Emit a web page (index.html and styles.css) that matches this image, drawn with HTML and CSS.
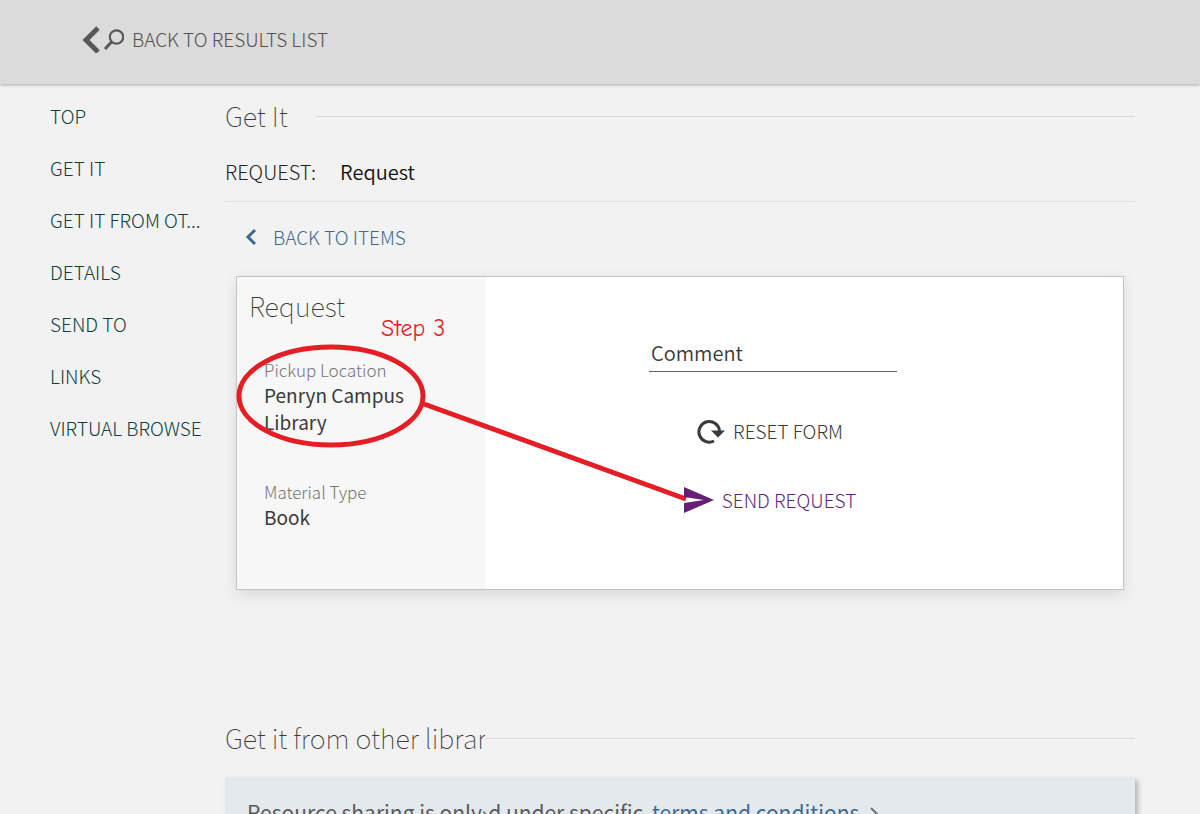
FILE: index.html
```html
<!DOCTYPE html>
<html lang="en">
<head>
    <meta charset="UTF-8">
    <meta name="viewport" content="width=device-width, initial-scale=1.0">
    <title>Library Search - Request</title>
    <link rel="stylesheet" href="styles.css">
</head>
<body>
    <header class="top-bar">
        <a href="#" class="back-results">
            <svg width="42" height="28" viewBox="0 0 42 28" aria-hidden="true">
                <path d="M16 3 L4 15 L16 27" fill="none" stroke="#585858" stroke-width="5"/>
                <circle cx="34.500" cy="12" r="6.700" fill="none" stroke="#585858" stroke-width="2.200"/>
                <path d="M30 16.500 L23 24" stroke="#585858" stroke-width="3"/>
            </svg>
            <span>BACK TO RESULTS LIST</span>
        </a>
    </header>

    <div class="page">
        <nav class="side-nav">
            <a href="#top">TOP</a>
            <a href="#getit">GET IT</a>
            <a href="#other">GET IT FROM OT...</a>
            <a href="#details">DETAILS</a>
            <a href="#send">SEND TO</a>
            <a href="#links">LINKS</a>
            <a href="#browse">VIRTUAL BROWSE</a>
        </nav>

        <main class="content">
            <section class="get-it" id="getit">
                <div class="section-head">
                    <h2>Get It</h2>
                    <hr>
                </div>
                <div class="request-row">
                    <span>REQUEST:</span>
                    <span class="request-type">Request</span>
                </div>
                <a href="#" class="back-items">
                    <svg width="12" height="18" viewBox="0 0 12 18" aria-hidden="true">
                        <path d="M10 2 L3 9 L10 16" fill="none" stroke="#3f6a8f" stroke-width="3"/>
                    </svg>
                    <span>BACK TO ITEMS</span>
                </a>

                <div class="card">
                    <div class="summary">
                        <h3>Request</h3>
                        <dl>
                            <dt>Pickup Location</dt>
                            <dd>Penryn Campus Library</dd>
                            <dt>Material Type</dt>
                            <dd>Book</dd>
                        </dl>
                    </div>
                    <form class="request-form">
                        <input type="text" name="comment" placeholder="Comment" aria-label="Comment">
                        <button type="reset" class="reset">
                            <svg width="28" height="26" viewBox="0 0 28 26" aria-hidden="true">
                                <path d="M17 23 A10.300 10.300 0 1 1 22.500 13" fill="none" stroke="#3a3a3a" stroke-width="3"/>
                                <path d="M14 12.500 L28 12.500 L21 19.500 Z" fill="#3a3a3a"/>
                            </svg>
                            <span>RESET FORM</span>
                        </button>
                        <button type="submit" class="send">
                            <svg width="30" height="26" viewBox="0 0 30 26" aria-hidden="true">
                                <path d="M0 0 L30 13 L0 26 L0 16 L20 13 L0 10 Z" fill="#651f76"/>
                            </svg>
                            <span>SEND REQUEST</span>
                        </button>
                    </form>
                    <svg class="marker" width="460" height="240" viewBox="0 0 460 240" aria-hidden="true">
                        <ellipse cx="94" cy="119" rx="92" ry="49"/>
                        <path d="M187 127 L449 222"/>
                    </svg>
                    <span class="step">Step 3</span>
                </div>
            </section>

            <section id="other">
                <div class="section-head">
                    <h2>Get it from other librar</h2>
                    <hr>
                </div>
                <div class="notice">
                    Resource sharing is only›d under specific
                    <a href="#">terms and conditions</a>
                    <svg width="10" height="16" viewBox="0 0 10 16" aria-hidden="true">
                        <path d="M1 1 L8 8 L1 15" fill="none" stroke="#5f7478" stroke-width="2"/>
                    </svg>
                </div>
            </section>
        </main>
    </div>
</body>
</html>
```
FILE: styles.css
```css
* {
    box-sizing: border-box;
}
body {
    margin: 0;
    background-color: #f2f2f2;
    color: #3a3a3a;
    font-family: "Noto Sans CJK SC", "Noto Sans", sans-serif;
    font-size: 19px;
    font-weight: 300;
    line-height: 26px;
    overflow: hidden;
}
a {
    text-decoration: none;
}
h2, h3, dl, dd {
    margin: 0;
}
.top-bar {
    display: flex;
    align-items: center;
    height: 84px;
    padding: 0 82px 6px;
    background-color: #dbdbdb;
    box-shadow: 0 1px 3px rgba(0, 0, 0, 0.3);
}
.back-results {
    display: flex;
    align-items: center;
    gap: 8px;
    color: #505050;
}
.page {
    display: grid;
    grid-template-columns: 159px 1fr;
    column-gap: 16px;
    padding: 19px 65px 0 50px;
}
.side-nav {
    display: flex;
    flex-direction: column;
    gap: 26px;
}
.side-nav a {
    color: #0f4040;
    white-space: nowrap;
}
.get-it {
    height: 622px;
}
.section-head {
    display: flex;
    align-items: center;
}
.section-head h2 {
    flex: none;
    max-width: 260px;
    padding-right: 28px;
    overflow: hidden;
    white-space: nowrap;
}
h2, h3 {
    color: #3a3a3a;
    font-size: 27px;
    font-weight: 100;
}
.section-head hr {
    flex: 1;
    margin: 0;
    border: 0;
    border-top: 1px solid #d8d8d8;
}
.request-row {
    display: flex;
    gap: 24px;
    padding: 30px 0 16px;
    border-bottom: 1px solid #e0e0e0;
    color: #222;
    font-size: 20px;
}
.request-type {
    color: #111;
    font-weight: 350;
}
.back-items {
    display: flex;
    align-items: center;
    gap: 16px;
    padding: 22px 20px 24px;
    color: #3f6a8f;
}
.card {
    position: relative;
    display: grid;
    grid-template-columns: 248px 1fr;
    min-height: 314px;
    margin: 2px 11px 0;
    border: 1px solid #c2c2c2;
    background-color: #fff;
    box-shadow: 0 5px 14px rgba(0, 0, 0, 0.1);
}
.summary {
    padding: 16px 27px 14px;
    background-color: #f7f7f7;
}
.summary h3 {
    margin-left: -15px;
}
.summary dl {
    margin-top: 39px;
}
dt {
    color: #757575;
    font-size: 17px;
    line-height: 23px;
}
dd {
    margin-bottom: 45px;
    font-size: 19px;
    font-weight: 400;
    line-height: 27px;
}
.request-form {
    display: flex;
    flex-direction: column;
    align-items: center;
    padding: 60px 62px 0 0;
}
.request-form input {
    width: 248px;
    height: 35px;
    margin-bottom: 46px;
    padding: 0 2px 3px;
    border: 0;
    border-bottom: 1px solid #666;
    background: none;
    font: inherit;
    font-size: 20px;
    font-weight: 350;
}
.request-form input::placeholder {
    color: #3a3a3a;
}
.request-form button {
    display: flex;
    align-items: center;
    gap: 8px;
    margin-bottom: 43px;
    padding: 0 6px 0 0;
    border: 0;
    background: none;
    color: #3a3a3a;
    font: inherit;
    cursor: pointer;
}
.request-form .send {
    position: relative;
    z-index: 2;
    color: #651f76;
}
.marker {
    position: absolute;
    top: 0;
    left: 0;
    overflow: visible;
    fill: none;
    stroke: #e51d25;
    stroke-width: 5;
    pointer-events: none;
}
.step {
    position: absolute;
    top: 38px;
    left: 144px;
    color: #e51d25;
    font-family: "Comic Sans MS", "Comic Neue", cursive;
    font-size: 24px;
    font-weight: 400;
}
.notice {
    height: 90px;
    margin-top: 26px;
    padding: 22px;
    background-color: #e4e9ed;
    box-shadow: 3px 3px 5px rgba(0, 0, 0, 0.25);
    color: #5a5a5a;
    font-size: 21px;
    font-weight: 400;
}
.notice a {
    margin: 0 6px 0 4px;
    color: #3f6a8f;
}
.notice svg {
    vertical-align: -2px;
}
```
